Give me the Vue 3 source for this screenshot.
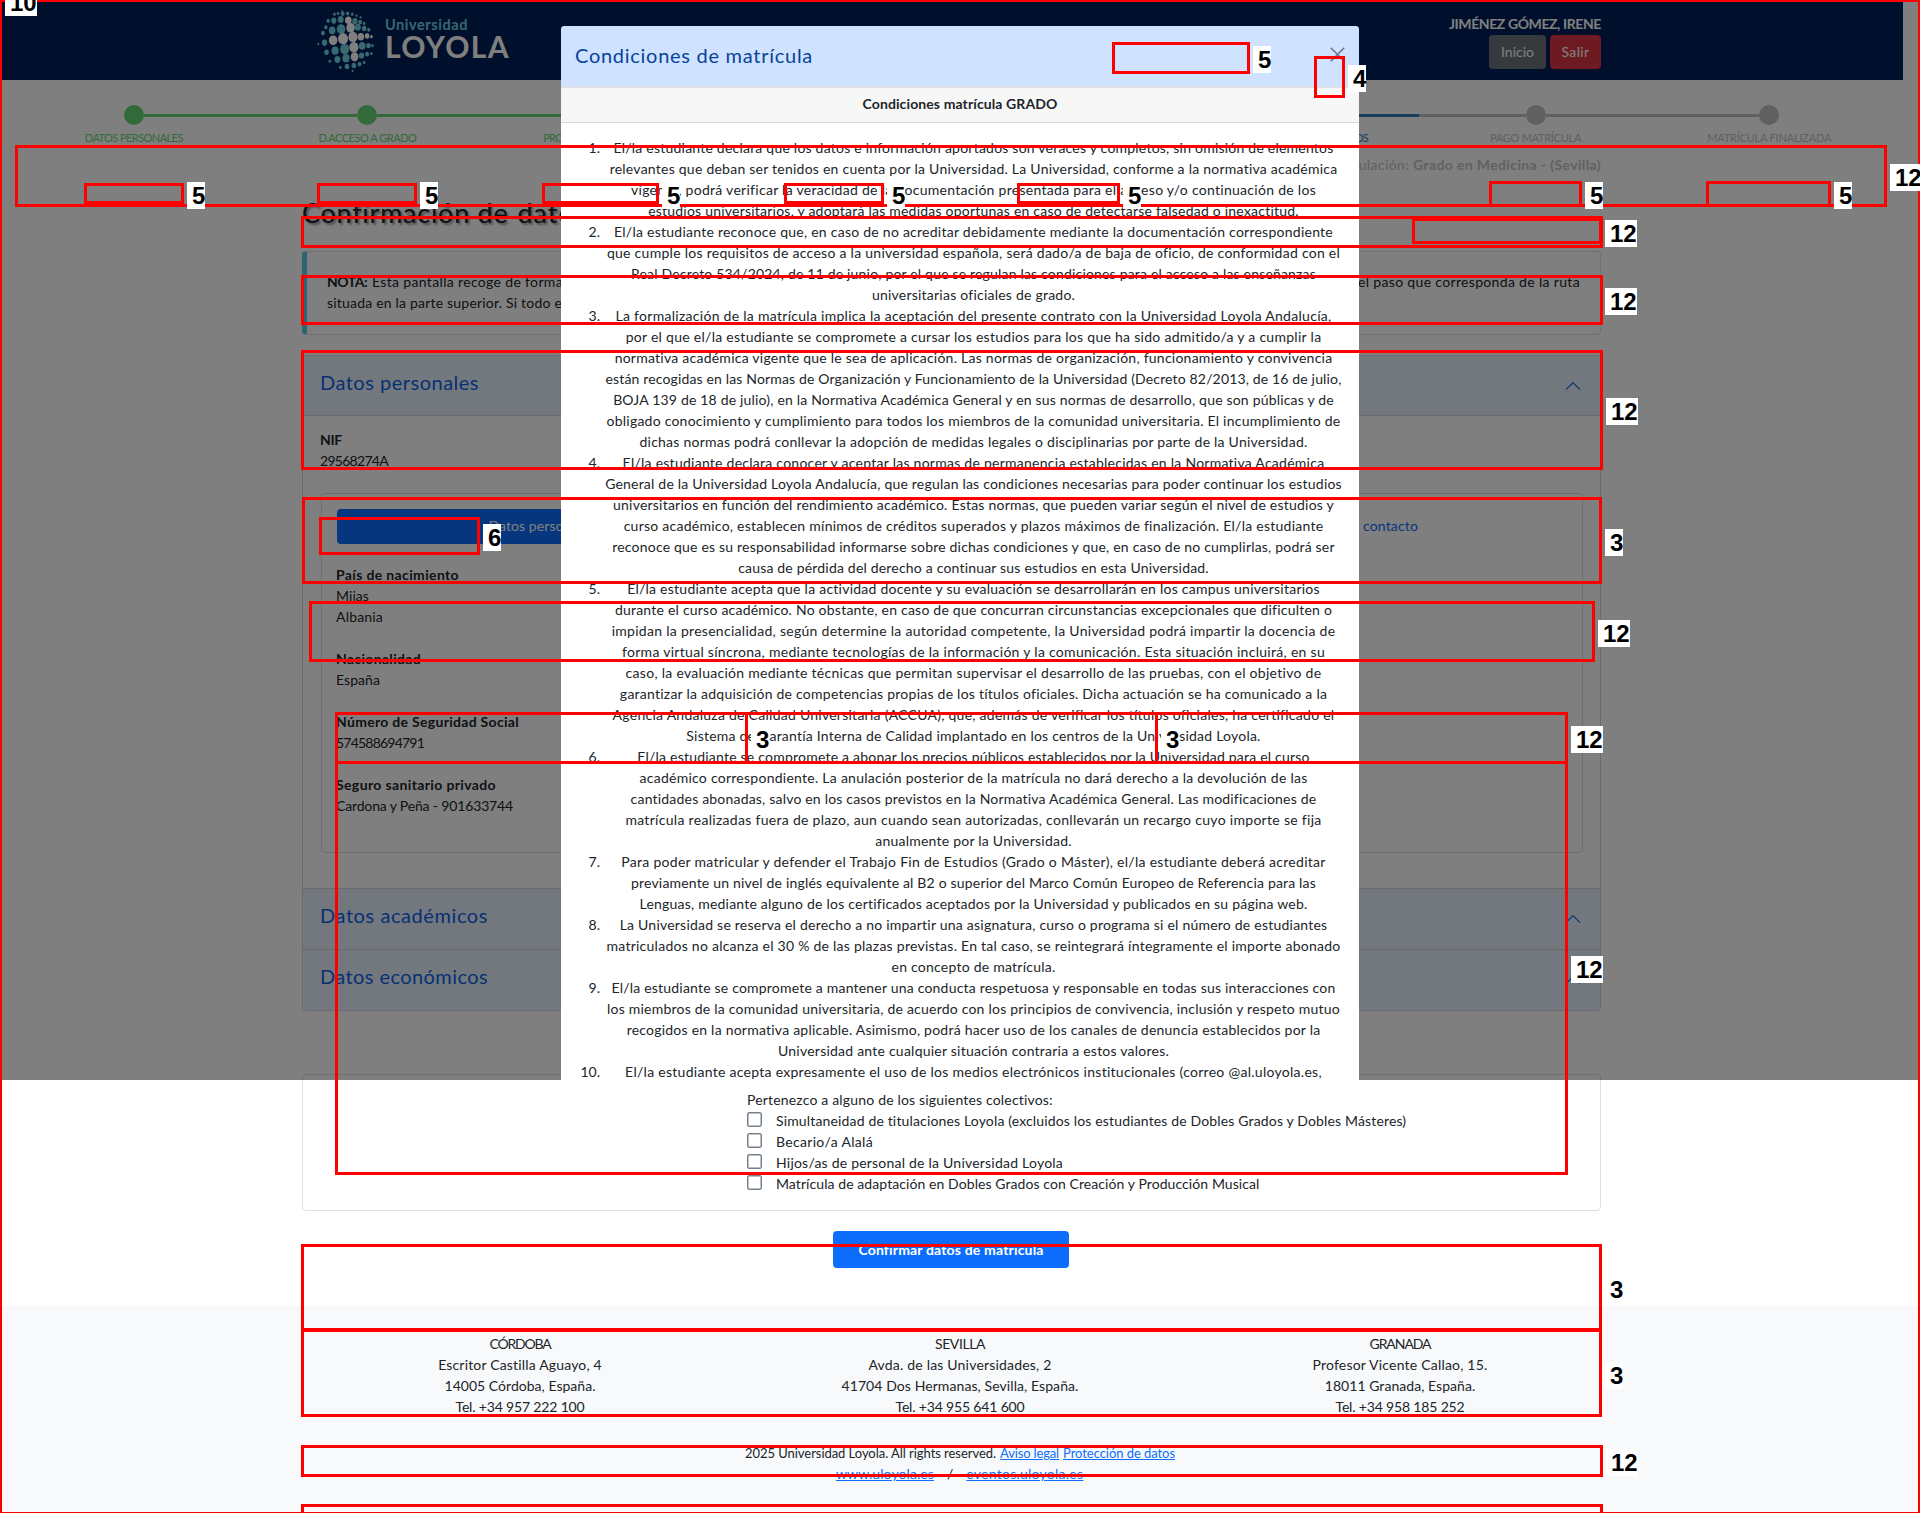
<script setup>
const vFit = {
  mounted(el, { value }) {
    const natural = el.getBoundingClientRect().width
    const count = el.textContent.trim().length
    if (value && count) el.style.letterSpacing = `${(value - natural) / count}px`
  },
}

const steps = [
  { label: 'DATOS PERSONALES', w: 98, state: 'done', end: 'first' },
  { label: 'D.ACCESO A GRADO', w: 98, state: 'done' },
  { label: 'PRO', w: 20, state: 'done', cls: 'start' },
  { label: '', w: 0, state: 'done' },
  { label: '', w: 0, state: 'done' },
  { label: 'OS', w: 13, state: 'current', cls: 'finish' },
  { label: 'PAGO MATRÍCULA', w: 91, state: 'todo' },
  { label: 'MATRÍCULA FINALIZADA', w: 124, state: 'todo', end: 'last' },
]

const terms = [
  [
    ['El/la estudiante declara que los datos e información aportados son veraces y completos, sin omisión de elementos', 720],
    ['relevantes que deban ser tenidos en cuenta por la Universidad. La Universidad, conforme a la normativa académica', 728],
    ['vigente, podrá verificar la veracidad de la documentación presentada para el acceso y/o continuación de los', 685],
    ['estudios universitarios, y adoptará las medidas oportunas en caso de detectarse falsedad o inexactitud.', 651],
  ],
  [
    ['El/la estudiante reconoce que, en caso de no acreditar debidamente mediante la documentación correspondiente', 719],
    ['que cumple los requisitos de acceso a la universidad española, será dado/a de baja de oficio, de conformidad con el', 733],
    ['Real Decreto 534/2024, de 11 de junio, por el que se regulan las condiciones para el acceso a las enseñanzas', 685],
    ['universitarias oficiales de grado.', 203],
  ],
  [
    ['La formalización de la matrícula implica la aceptación del presente contrato con la Universidad Loyola Andalucía,', 716],
    ['por el que el/la estudiante se compromete a cursar los estudios para los que ha sido admitido/a y a cumplir la', 696],
    ['normativa académica vigente que le sea de aplicación. Las normas de organización, funcionamiento y convivencia', 718],
    ['están recogidas en las Normas de Organización y Funcionamiento de la Universidad (Decreto 82/2013, de 16 de julio,', 736],
    ['BOJA 139 de 18 de julio), en la Normativa Académica General y en sus normas de desarrollo, que son públicas y de', 721],
    ['obligado conocimiento y cumplimiento para todos los miembros de la comunidad universitaria. El incumplimiento de', 734],
    ['dichas normas podrá conllevar la adopción de medidas legales o disciplinarias por parte de la Universidad.', 668],
  ],
  [
    ['El/la estudiante declara conocer y aceptar las normas de permanencia establecidas en la Normativa Académica', 702],
    ['General de la Universidad Loyola Andalucía, que regulan las condiciones necesarias para poder continuar los estudios', 737],
    ['universitarios en función del rendimiento académico. Estas normas, que pueden variar según el nivel de estudios y', 721],
    ['curso académico, establecen mínimos de créditos superados y plazos máximos de finalización. El/la estudiante', 699.5],
    ['reconoce que es su responsabilidad informarse sobre dichas condiciones y que, en caso de no cumplirlas, podrá ser', 722.5],
    ['causa de pérdida del derecho a continuar sus estudios en esta Universidad.', 471],
  ],
  [
    ['El/la estudiante acepta que la actividad docente y su evaluación se desarrollarán en los campus universitarios', 693],
    ['durante el curso académico. No obstante, en caso de que concurran circunstancias excepcionales que dificulten o', 717],
    ['impidan la presencialidad, según determine la autoridad competente, la Universidad podrá impartir la docencia de', 724],
    ['forma virtual síncrona, mediante tecnologías de la información y la comunicación. Esta situación incluirá, en su', 703],
    ['caso, la evaluación mediante técnicas que permitan supervisar el desarrollo de las pruebas, con el objetivo de', 696],
    ['garantizar la adquisición de competencias propias de los títulos oficiales. Dicha actuación se ha comunicado a la', 707.5],
    ['Agencia Andaluza de Calidad Universitaria (ACCUA), que, además de verificar los títulos oficiales, ha certificado el', 721.5],
    ['Sistema de Garantía Interna de Calidad implantado en los centros de la Universidad Loyola.', 574.5],
  ],
  [
    ['El/la estudiante se compromete a abonar los precios públicos establecidos por la Universidad para el curso', 672.5],
    ['académico correspondiente. La anulación posterior de la matrícula no dará derecho a la devolución de las', 668],
    ['cantidades abonadas, salvo en los casos previstos en la Normativa Académica General. Las modificaciones de', 686],
    ['matrícula realizadas fuera de plazo, aun cuando sean autorizadas, conllevarán un recargo cuyo importe se fija', 696],
    ['anualmente por la Universidad.', 196.5],
  ],
  [
    ['Para poder matricular y defender el Trabajo Fin de Estudios (Grado o Máster), el/la estudiante deberá acreditar', 704.5],
    ['previamente un nivel de inglés equivalente al B2 o superior del Marco Común Europeo de Referencia para las', 685],
    ['Lenguas, mediante alguno de los certificados aceptados por la Universidad y publicados en su página web.', 668],
  ],
  [
    ['La Universidad se reserva el derecho a no impartir una asignatura, curso o programa si el número de estudiantes', 708],
    ['matriculados no alcanza el 30 % de las plazas previstas. En tal caso, se reintegrará íntegramente el importe abonado', 734],
    ['en concepto de matrícula.', 164],
  ],
  [
    ['El/la estudiante se compromete a mantener una conducta respetuosa y responsable en todas sus interacciones con', 724],
    ['los miembros de la comunidad universitaria, de acuerdo con los principios de convivencia, inclusión y respeto mutuo', 733],
    ['recogidos en la normativa aplicable. Asimismo, podrá hacer uso de los canales de denuncia establecidos por la', 694],
    ['Universidad ante cualquier situación contraria a estos valores.', 391],
  ],
  [
    ['El/la estudiante acepta expresamente el uso de los medios electrónicos institucionales (correo @al.uloyola.es,', 697],
  ],
]

const personal = [
  ['País de nacimiento', 123, true],
  ['Mijas', 33],
  ['Albania', 47],
  null,
  ['Nacionalidad', 85, true],
  ['España', 44],
  null,
  ['Número de Seguridad Social', 183, true],
  ['574588694791', 88],
  null,
  ['Seguro sanitario privado', 160, true],
  ['Cardona y Peña - 901633744', 177],
]

const groups = [
  ['Simultaneidad de titulaciones Loyola (excluidos los estudiantes de Dobles Grados y Dobles Másteres)', 630.5],
  ['Becario/a Alalá', 97],
  ['Hijos/as de personal de la Universidad Loyola', 287],
  ['Matrícula de adaptación en Dobles Grados con Creación y Producción Musical', 483.5],
]

const campuses = [
  [['CÓRDOBA', 61], ['Escritor Castilla Aguayo, 4', 164], ['14005 Córdoba, España.', 151], ['Tel. +34 957 222 100', 129]],
  [['SEVILLA', 50], ['Avda. de las Universidades, 2', 183], ['41704 Dos Hermanas, Sevilla, España.', 237], ['Tel. +34 955 641 600', 129]],
  [['GRANADA', 61], ['Profesor Vicente Callao, 15.', 175], ['18011 Granada, España.', 150.5], ['Tel. +34 958 185 252', 129]],
]

// Annotated regions: left, top, right, bottom
const regions = [
  [15, 145, 1887, 207],
  [84, 183, 184, 204],
  [317, 183, 417, 204],
  [542, 183, 659, 204],
  [784, 183, 884, 204],
  [1017, 183, 1120, 204],
  [1489, 181, 1582, 207],
  [1706, 181, 1831, 207],
  [1112, 42, 1250, 74],
  [1314, 56, 1345, 98],
  [301, 216, 1603, 248],
  [1412, 218, 1602, 244],
  [301, 275, 1603, 325],
  [301, 350, 1603, 470],
  [302, 497, 1602, 584],
  [319, 517, 480, 555],
  [309, 601, 1595, 662],
  [335, 712, 1568, 764],
  [335, 712, 748, 764],
  [1155, 712, 1568, 764],
  [335, 761, 1568, 1175],
  [301, 1244, 1602, 1331],
  [301, 1329, 1602, 1417],
  [301, 1445, 1603, 1477],
  [301, 1504, 1603, 1530],
]

// Region counters: left, top, text
const tags = [
  [5, -11, '10'],
  [187, 182, '5'],
  [420, 182, '5'],
  [662, 182, '5'],
  [887, 182, '5'],
  [1123, 182, '5'],
  [1585, 182, '5'],
  [1834, 182, '5'],
  [1890, 164, '12'],
  [1253, 46, '5'],
  [1348, 65, '4'],
  [1605, 220, '12'],
  [1605, 288, '12'],
  [1606, 398, '12'],
  [1605, 529, '3'],
  [483, 524, '6'],
  [1598, 620, '12'],
  [751, 726, '3'],
  [1161, 726, '3'],
  [1571, 726, '12'],
  [1571, 956, '12'],
  [1605, 1276, '3'],
  [1605, 1362, '3'],
  [1606, 1449, '12'],
]

const dots = [
  [98, 18, 2, 0], [75, 29, 4, 0], [86, 26, 4, 0], [100, 27, 6, 0], [115, 27, 5, 0], [129, 29, 4, 0], [142, 33, 3, 0], [154, 38, 3, 0],
  [56, 49, 5, 0], [73, 48, 8, 0], [94, 45, 9, 0], [117, 47, 10, 1], [137, 50, 8, 0], [153, 53, 6, 0], [165, 57, 4, 0],
  [40, 86, 6, 0], [49, 68, 5, 0], [68, 78, 10, 0], [95, 74, 13, 0], [124, 70, 13, 1], [146, 68, 9, 0], [165, 72, 7, 0], [179, 76, 5, 0],
  [26, 119, 3, 0], [45, 115, 8, 0], [71, 108, 13, 1], [101, 103, 15, 1], [131, 98, 14, 1], [155, 97, 10, 1], [174, 95, 7, 1], [187, 97, 4, 1],
  [51, 144, 7, 0], [77, 139, 11, 0], [106, 134, 14, 0], [134, 129, 14, 1], [159, 125, 10, 0], [178, 124, 7, 0], [190, 124, 4, 0],
  [61, 171, 4, 0], [84, 166, 9, 0], [110, 162, 11, 0], [136, 158, 12, 1], [157, 154, 8, 0], [174, 150, 6, 0], [187, 148, 4, 0],
  [93, 190, 4, 0], [113, 187, 7, 0], [134, 184, 7, 0], [151, 180, 6, 0], [165, 175, 4, 0], [130, 201, 3, 0],
]
</script>

<template>
  <div class="screen">
    <div class="page">
      <header class="topbar">
        <div class="brand">
          <svg class="globe" viewBox="20 10 180 200">
            <ellipse v-for="(d, i) in dots" :key="i" :cx="d[0]" :cy="d[1]" :rx="d[2]" :ry="d[2] * 1.1 + 0.6" :fill="d[3] ? '#fff' : '#70d0e0'" />
          </svg>
          <div class="brand-text">
            <div class="uni"><span v-fit="83">Universidad</span></div>
            <div class="loy"><span v-fit="125">LOYOLA</span></div>
          </div>
        </div>
        <div class="user">
          <div class="user-name"><span v-fit="152">JIMÉNEZ GÓMEZ, IRENE</span></div>
          <div class="user-actions">
            <button class="btn grey"><span v-fit="33">Inicio</span></button>
            <button class="btn red"><span v-fit="28">Salir</span></button>
          </div>
        </div>
      </header>

      <nav class="stepper">
        <div v-for="(s, i) in steps" :key="i" class="step" :class="[s.state, s.end]">
          <div class="track"><i class="bar lead"></i><i class="dot"></i><i class="bar trail"></i></div>
          <div class="step-label" :class="s.cls"><span v-fit="s.w">{{ s.label }}</span></div>
        </div>
      </nav>

      <main class="container">
        <div class="degree"><span v-fit="68">Titulación:</span><b v-fit="188">Grado en Medicina - (Sevilla)</b></div>
        <h1><span v-fit="206">Confirmación de</span><span v-fit="70">datos</span></h1>

        <section class="note">
          <div class="note-line">
            <p><b v-fit="40">NOTA:</b><span v-fit="191">Esta pantalla recoge de forma</span></p>
            <p><span v-fit="222">el paso que corresponda de la ruta</span></p>
          </div>
          <div class="note-line"><span v-fit="235">situada en la parte superior. Si todo e</span></div>
        </section>

        <section class="accordion">
          <div class="acc-head first">
            <span v-fit="159">Datos personales</span>
            <svg viewBox="0 0 16 16"><path d="M1.6 4.6a.5.5 0 0 1 .7 0L8 10.3l5.7-5.7a.5.5 0 0 1 .7.7l-6 6a.5.5 0 0 1-.7 0l-6-6a.5.5 0 0 1 0-.7z" /></svg>
          </div>
          <div class="acc-body">
            <div><b v-fit="22">NIF</b></div>
            <div><span v-fit="68">29568274A</span></div>
            <div class="panel">
              <div class="tabs">
                <div class="tab active"><span v-fit="107">Datos personales</span></div>
                <div class="tab"></div>
                <div class="tab split"><span v-fit="52">Datos de</span><span v-fit="55">contacto</span></div>
              </div>
              <div class="fields">
                <div v-for="(f, i) in personal" :key="i" class="field" :class="{ strong: f && f[2] }">
                  <span v-if="f" v-fit="f[1]">{{ f[0] }}</span>
                </div>
              </div>
            </div>
          </div>
          <div v-for="t in ['Datos académicos', 'Datos económicos']" :key="t" class="acc-head">
            <span v-fit="168">{{ t }}</span>
            <svg viewBox="0 0 16 16"><path d="M1.6 4.6a.5.5 0 0 1 .7 0L8 10.3l5.7-5.7a.5.5 0 0 1 .7.7l-6 6a.5.5 0 0 1-.7 0l-6-6a.5.5 0 0 1 0-.7z" /></svg>
          </div>
        </section>

        <section class="groups">
          <div><span v-fit="306">Pertenezco a alguno de los siguientes colectivos:</span></div>
          <label v-for="g in groups" :key="g[0]"><i class="check"></i><span v-fit="g[1]">{{ g[0] }}</span></label>
        </section>

        <button class="confirm"><span v-fit="185">Confirmar datos de matrícula</span></button>
      </main>
    </div>

    <footer class="footer">
      <div class="campuses">
        <div v-for="(c, i) in campuses" :key="i" class="campus">
          <div v-for="l in c" :key="l[0]"><span v-fit="l[1]">{{ l[0] }}</span></div>
        </div>
      </div>
      <div class="legal">
        <span v-fit="251">2025 Universidad Loyola. All rights reserved.</span>
        <a v-fit="59">Aviso legal</a>
        <a v-fit="112">Protección de datos</a>
      </div>
      <div class="sites"><a v-fit="98">www.uloyola.es</a><span>/</span><a v-fit="117">eventos.uloyola.es</a></div>
    </footer>

    <div class="backdrop">
      <div class="modal">
        <div class="modal-head">
          <span v-fit="238">Condiciones de matrícula</span>
          <svg viewBox="0 0 14 14"><path d="M0.7 0.7 13.3 13.3M13.3 0.7 0.7 13.3" /></svg>
        </div>
        <div class="modal-sub"><span v-fit="195">Condiciones matrícula GRADO</span></div>
        <div class="terms">
          <div v-for="(t, i) in terms" :key="i" class="term">
            <div class="num">{{ i + 1 }}.</div>
            <div class="term-text">
              <div v-for="l in t" :key="l[0]"><span v-fit="l[1]">{{ l[0] }}</span></div>
            </div>
          </div>
        </div>
      </div>
    </div>

    <div class="marks">
      <i class="outer"></i>
      <i v-for="(r, i) in regions" :key="i" class="region" :style="{ left: r[0] + 'px', top: r[1] + 'px', width: r[2] - r[0] + 'px', height: r[3] - r[1] + 'px' }"></i>
      <b v-for="(t, i) in tags" :key="'t' + i" class="tag" :style="{ left: t[0] + 'px', top: t[1] + 'px' }">{{ t[2] }}</b>
    </div>
  </div>
</template>

<style>
body { margin: 0; overflow: hidden; }
</style>

<style scoped>
* { box-sizing: border-box; }
.screen {
  position: relative; width: 1920px; height: 1513px; overflow: hidden; background: #fff;
  font: 14px/21px Lato, "Open Sans", sans-serif; color: #212529; white-space: nowrap;
}
span, b, a { display: inline-block; }
.page { width: 1903px; height: 1306px; }
.topbar { height: 80px; background: #001f57; display: flex; justify-content: space-between; padding: 0 302px 0 316px; }
.brand { display: flex; padding-top: 8px; }
.globe { width: 60px; height: 66px; }
.brand-text { margin-left: 9px; padding-top: 9px; }
.uni { font-weight: 700; font-size: 14.5px; line-height: 16px; color: #70d0e0; }
.loy { font-weight: 700; font-size: 30px; line-height: 27px; color: #fff; }
.user { padding-top: 13px; text-align: right; }
.user-name { font-weight: 700; color: #fff; height: 22px; }
.user-actions { display: flex; justify-content: flex-end; gap: 4px; }
.btn { border: 0; height: 34px; border-radius: 4px; color: #fff; font: inherit; padding: 0 0 2px; text-align: center; }
.btn.grey { width: 57px; background: #6c757d; }
.btn.red { width: 51px; background: #dc3545; }

.stepper { height: 75px; padding: 25px 17px 0; display: grid; grid-template-columns: repeat(8, 1fr); }
.track { display: flex; align-items: center; height: 20px; }
.bar { flex: 1; height: 3px; background: currentColor; }
.dot { width: 20px; height: 20px; border-radius: 50%; background: currentColor; }
.done { color: #66d474; }
.current { color: #337ab7; }
.todo { color: #c0c0c0; }
.first .lead, .last .trail { background: transparent; }
.step-label { font-size: 11px; line-height: 16px; padding-top: 5px; text-align: center; }
.step-label.start { text-align: left; padding-left: 59px; }
.step-label.finish { text-align: right; padding-right: 51px; }

.container { margin-left: 302px; width: 1299px; }
.degree { height: 21px; line-height: 19px; display: flex; justify-content: flex-end; gap: 4px; color: #c2c2c2; }
h1 { margin: 17px 0 18px; height: 40px; line-height: 39px; font-size: 27px; font-weight: 400; -webkit-text-stroke: .2px; display: flex; gap: 9px; text-shadow: 2px 2px 2px #999; }
.note { height: 84px; border: 1px solid #dfe2e5; border-left: 5px solid #5fc8e4; border-radius: 4px; padding: 19px 20px 0; margin-bottom: 20px; }
.note-line { display: flex; justify-content: space-between; }
.note-line p { margin: 0; display: flex; gap: 5px; }

.accordion { border: 1px solid #d5d7da; border-radius: 4px; overflow: hidden; }
.acc-head { height: 61px; background: #e7f1ff; border-top: 1px solid #cfd4da; color: #0c63e4; font-size: 20px; display: flex; align-items: center; justify-content: space-between; padding: 0 18px 0 17px; }
.acc-head > span { padding-bottom: 8px; }
.acc-head.first { height: 60px; border-top: 0; border-bottom: 1px solid #cfd4da; }
.acc-head.first > span { padding-bottom: 6px; }
.acc-head svg { width: 18px; height: 18px; transform: rotate(180deg); fill: #0c63e4; }
.acc-body { padding: 13px 17px 0 17px; height: 472px; }
.panel { margin: 22px 0 0 1px; height: 360px; border: 1px solid #d9dbde; border-radius: 4px; padding: 15px 15px 0; }
.tabs { display: grid; grid-template-columns: repeat(3, 1fr); height: 35px; }
.tab { color: #0d6efd; text-align: center; line-height: 33px; border-radius: 4px; }
.tab.active { background: #0d6efd; color: #fff; }
.tab.split { display: flex; justify-content: center; gap: 5px; }
.fields { padding-top: 20px; margin-left: -1px; }
.field { height: 21px; }
.strong { font-weight: 700; }

.groups { margin-top: 63px; height: 137px; border: 1px solid #dfdfdf; border-radius: 4px; padding: 14px 0 0 444px; }
.groups label { display: flex; }
.check { width: 15px; height: 15px; margin: 2px 14px 0 0; border: 1px solid #76808c; box-shadow: inset 0 0 0 .5px #76808c; border-radius: 2px; }
.confirm { display: block; margin: 20px 0 0 531px; width: 236px; height: 37px; border: 0; border-radius: 4px; background: #0d6efd; color: #fff; font: inherit; font-weight: 700; }

.footer { height: 207px; background: #f8f9fa; padding: 27px 0 0 300px; }
.campuses { display: grid; grid-template-columns: repeat(3, 440px); text-align: center; }
.legal { margin-top: 26px; padding-left: 445px; display: flex; gap: 4px; font-size: 13px; }
.sites { padding-left: 536px; display: flex; gap: 13px; font-size: 14px; line-height: 20px; }
a { color: #0d6efd; text-decoration: underline; }

.backdrop { position: absolute; inset: 0 0 auto 0; height: 1080px; background: rgba(0, 0, 0, .5); overflow: hidden; }
.modal { margin: 26px 0 0 561px; width: 798px; height: 1080px; background: #fff; border-radius: 4px 4px 0 0; overflow: hidden; }
.modal-head { height: 62px; background: #cfe2ff; border-bottom: 2px solid #dee2e6; display: flex; justify-content: space-between; align-items: center; padding: 0 14px; color: #084298; font-size: 20px; }
.modal-head span { padding-bottom: 2px; }
.modal-head svg { width: 15px; height: 15px; margin-top: -3px; stroke: #6d7889; stroke-width: 1.5; fill: none; }
.modal-sub { height: 35px; background: #f7f7f7; border-bottom: 1px solid #d8d8d8; text-align: center; font-weight: 700; line-height: 31px; }
.terms { padding: 14px 12px 0 0; }
.term { display: flex; }
.num { width: 39px; text-align: right; }
.term-text { flex: 1; text-align: center; }

.marks { position: absolute; inset: 0; overflow: hidden; }
.outer { position: absolute; inset: 0; border: 2px solid #f00; border-bottom-width: 1px; }
.region { position: absolute; border: 3px solid #f00; }
.tag { position: absolute; height: 27px; line-height: 27px; padding: 0 0 0 5px; background: #fff; color: #000; font-family: "Liberation Sans", Arial, sans-serif; font-size: 24px; }
</style>
